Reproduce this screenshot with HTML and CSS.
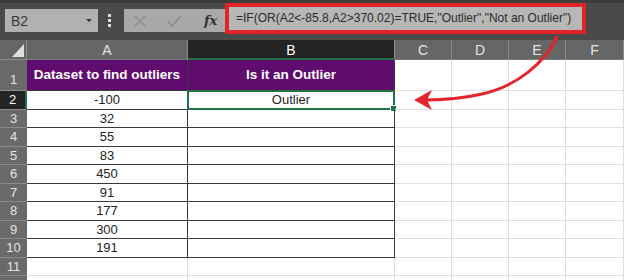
FILE: index.html
```html
<!DOCTYPE html>
<html lang="en">
<head>
  <meta charset="UTF-8">
  <title>Outlier check</title>
  <link rel="stylesheet" href="styles.css">
</head>
<body>
<div class="app">
  <div class="toolbar">
    <div class="namebox">
      <span>B2</span>
      <span class="caret"></span>
    </div>
    <div class="dots"><i></i><i></i><i></i></div>
    <div class="fbtns">
      <svg class="ico" width="14" height="14" viewBox="0 0 14 14"><path d="M2 2 L12 12 M12 2 L2 12" stroke="#8e8e8e" stroke-width="1.6" fill="none"/></svg>
      <svg class="ico" width="16" height="14" viewBox="0 0 16 14"><path d="M1.5 7.5 L6 12 L14.5 2" stroke="#8e8e8e" stroke-width="1.8" fill="none"/></svg>
      <span class="fx">fx</span>
    </div>
    <div class="formula">=IF(OR(A2&lt;-85.8,A2&gt;370.02)=TRUE,"Outlier","Not an Outlier")</div>
  </div>

  <div class="sheet">
    <div class="corner"><span class="tri"></span></div>
    <div class="colhead">A</div>
    <div class="colhead sel">B</div>
    <div class="colhead">C</div>
    <div class="colhead">D</div>
    <div class="colhead">E</div>
    <div class="colhead">F</div>

    <div class="rowhead first">1</div>
    <div class="cell title">Dataset to find outliers</div>
    <div class="cell title">Is it an Outlier</div>
    <div class="cell"></div><div class="cell"></div><div class="cell"></div><div class="cell"></div>

    <div class="rowhead sel">2</div>
    <div class="cell data">-100</div>
    <div class="cell data b">Outlier<span class="pick"></span></div>
    <div class="cell"></div><div class="cell"></div><div class="cell"></div><div class="cell"></div>

    <div class="rowhead">3</div>
    <div class="cell data">32</div><div class="cell data b"></div>
    <div class="cell"></div><div class="cell"></div><div class="cell"></div><div class="cell"></div>

    <div class="rowhead">4</div>
    <div class="cell data">55</div><div class="cell data b"></div>
    <div class="cell"></div><div class="cell"></div><div class="cell"></div><div class="cell"></div>

    <div class="rowhead">5</div>
    <div class="cell data">83</div><div class="cell data b"></div>
    <div class="cell"></div><div class="cell"></div><div class="cell"></div><div class="cell"></div>

    <div class="rowhead">6</div>
    <div class="cell data">450</div><div class="cell data b"></div>
    <div class="cell"></div><div class="cell"></div><div class="cell"></div><div class="cell"></div>

    <div class="rowhead">7</div>
    <div class="cell data">91</div><div class="cell data b"></div>
    <div class="cell"></div><div class="cell"></div><div class="cell"></div><div class="cell"></div>

    <div class="rowhead">8</div>
    <div class="cell data">177</div><div class="cell data b"></div>
    <div class="cell"></div><div class="cell"></div><div class="cell"></div><div class="cell"></div>

    <div class="rowhead">9</div>
    <div class="cell data">300</div><div class="cell data b"></div>
    <div class="cell"></div><div class="cell"></div><div class="cell"></div><div class="cell"></div>

    <div class="rowhead">10</div>
    <div class="cell data last">191</div><div class="cell data b last"></div>
    <div class="cell"></div><div class="cell"></div><div class="cell"></div><div class="cell"></div>

    <div class="rowhead">11</div>
    <div class="cell"></div><div class="cell"></div>
    <div class="cell"></div><div class="cell"></div><div class="cell"></div><div class="cell"></div>

    <div class="rowhead"></div>
    <div class="cell"></div><div class="cell"></div>
    <div class="cell"></div><div class="cell"></div><div class="cell"></div><div class="cell"></div>
  </div>

  <svg class="arrow" width="624" height="280" viewBox="0 0 624 280">
    <path d="M557 37 C545 62 518 86 482 94 C460 99 442 100 424 100" stroke="#e3242b" stroke-width="3" fill="none" stroke-linecap="round"/>
    <path d="M414 100 L432 90 L427 100 L432 110 Z" fill="#e3242b"/>
  </svg>
</div>
</body>
</html>
```

FILE: styles.css
```css
body {
  margin: 0;
  font-family: "Liberation Sans", Arial, sans-serif;
  background: #ffffff;
}

.app {
  position: relative;
  width: 624px;
  height: 280px;
  overflow: hidden;
}

.toolbar {
  height: 40px;
  background: #4a4a4a;
  border-top: 3px solid #3d3d3d;
  box-sizing: border-box;
  display: flex;
  align-items: flex-start;
}

.namebox {
  margin: 6px 0 0 5px;
  width: 93px;
  height: 23px;
  background: #b1b1b1;
  display: flex;
  align-items: center;
  justify-content: space-between;
  padding: 0 6px 0 6px;
  box-sizing: border-box;
  font-size: 14px;
  color: #3a3a3a;
}

.caret {
  width: 0;
  height: 0;
  border-left: 3px solid transparent;
  border-right: 3px solid transparent;
  border-top: 3px solid #333;
}

.dots {
  margin: 11px 0 0 10px;
  width: 3px;
  display: flex;
  flex-direction: column;
  gap: 2px;
}

.dots i {
  display: block;
  width: 3px;
  height: 3px;
  background: #dcdcdc;
}

.fbtns {
  margin: 6px 0 0 13px;
  width: 101px;
  height: 23px;
  background: #a9a9a9;
  display: flex;
  align-items: center;
  padding-left: 9px;
  gap: 19px;
  box-sizing: border-box;
}

.fx {
  font-family: "DejaVu Serif", "Liberation Serif", serif;
  font-style: italic;
  font-weight: bold;
  font-size: 13px;
  color: #333;
  margin-left: 3px;
}

.formula {
  width: 361px;
  height: 31px;
  border: 4px solid #e2232a;
  background: #b7b7b7;
  box-sizing: border-box;
  font-size: 12px;
  color: #2b2b2b;
  padding-left: 7px;
  line-height: 22px;
  white-space: nowrap;
}

.sheet {
  display: grid;
  grid-template-columns: 27px 161px 207px 57px 57px 57px 58px;
  grid-template-rows: 20px 31px repeat(11, 18.5px);
}

.corner {
  background: #666666;
  border-right: 1px solid #8a8a8a;
  border-bottom: 1px solid #8a8a8a;
  position: relative;
}

.tri {
  position: absolute;
  right: 2px;
  bottom: 2px;
  width: 0;
  height: 0;
  border-left: 12px solid transparent;
  border-bottom: 13px solid #dedede;
}

.colhead {
  background: #666666;
  color: #e4e4e4;
  font-size: 14px;
  text-align: center;
  line-height: 20px;
  border-right: 1px solid #8c8c8c;
  border-bottom: 1px solid #7a7a7a;
  box-sizing: border-box;
}

.colhead.sel {
  background: #232323;
  color: #ffffff;
  border-bottom: 2px solid #217346;
}

.rowhead {
  background: #6a6a6a;
  color: #e4e4e4;
  font-size: 13px;
  text-align: center;
  line-height: 18px;
  border-bottom: 1px solid #8c8c8c;
  box-sizing: border-box;
}

.rowhead.first {
  display: flex;
  align-items: flex-end;
  justify-content: center;
  padding-bottom: 1px;
}

.rowhead.sel {
  background: #242424;
  color: #ffffff;
  border-right: 2px solid #217346;
}

.cell {
  border-right: 1px solid #dedede;
  border-bottom: 1px solid #dedede;
  box-sizing: border-box;
  font-size: 13px;
  color: #242424;
  text-align: center;
  line-height: 18px;
  position: relative;
}

.cell.title {
  background: #5f0c6e;
  color: #ffffff;
  font-weight: bold;
  font-size: 13.5px;
  line-height: 30px;
  border-right: 1px solid #3a3a3a;
  border-bottom: 1px solid #3a3a3a;
}

.cell.data {
  border-right: 1px solid #3a3a3a;
  border-bottom: 1px solid #3a3a3a;
}

.pick {
  position: absolute;
  left: -1px;
  top: -1px;
  right: -1px;
  bottom: -1px;
  border: 2px solid #217346;
}

.pick::after {
  content: "";
  position: absolute;
  right: -4px;
  bottom: -4px;
  width: 5px;
  height: 5px;
  background: #217346;
  border: 1px solid #ffffff;
}

.arrow {
  position: absolute;
  left: 0;
  top: 0;
  pointer-events: none;
}
```
